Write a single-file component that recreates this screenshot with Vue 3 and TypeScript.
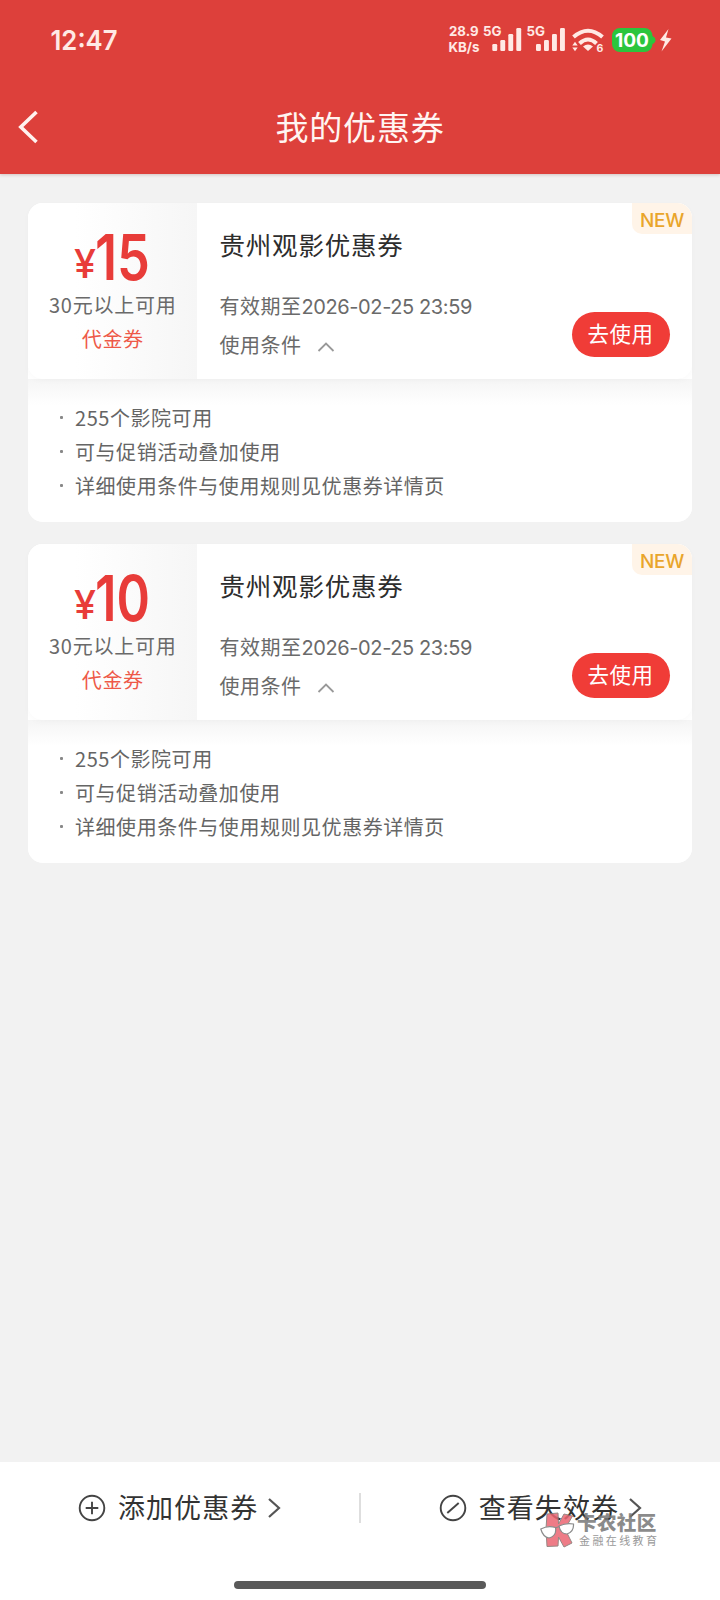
<script setup lang="ts">
interface Coupon {
  id: number
  amount: string
  threshold: string
  kind: string
  title: string
  expires: string
  rules: string[]
}

const rules: string[] = ['255个影院可用', '可与促销活动叠加使用', '详细使用条件与使用规则见优惠券详情页']

const coupons: Coupon[] = ['15', '10'].map((amount, id) => ({
  id,
  amount,
  threshold: '30元以上可用',
  kind: '代金券',
  title: '贵州观影优惠券',
  expires: '2026-02-25 23:59',
  rules,
}))

const bars = [
  { x: 0, h: 7 },
  { x: 8, h: 11 },
  { x: 16, h: 17 },
  { x: 24, h: 23 },
]
</script>

<template>
  <div class="screen">
    <header class="header">
      <div class="status">
        <svg width="720" height="80" viewBox="0 0 720 80" fill="#ffe9e5">
          <text class="clock" x="50.500" y="50.3" textLength="67" lengthAdjust="spacingAndGlyphs">12:47</text>
          <g class="tiny">
            <text x="449" y="36.4" textLength="29.500" lengthAdjust="spacingAndGlyphs">28.9</text>
            <text x="448.500" y="51.500" textLength="31" lengthAdjust="spacingAndGlyphs">KB/s</text>
            <text x="483" y="36.4" textLength="18.500" lengthAdjust="spacingAndGlyphs">5G</text>
            <text x="526.500" y="36.4" textLength="18.500" lengthAdjust="spacingAndGlyphs">5G</text>
          </g>
          <g v-for="left in [492.3, 536]" :key="left">
            <rect v-for="b in bars" :key="b.x" :x="left + b.x" :y="51 - b.h" width="4.9" :height="b.h" rx="1.2" />
          </g>
          <g fill="none" stroke="#ffe9e5" stroke-width="4">
            <path d="M573.500 37Q588 24.500 602.500 37" />
            <path d="M579.500 43.500Q588 35.500 596.500 43.500" />
          </g>
          <path d="M583 46.500Q588 42.500 593 46.500L588 51Z" />
          <path d="M572.300 45.500L575 41.800L577.700 45.500ZM572.300 47.500L575 51.200L577.700 47.500Z" />
          <text class="six" x="596.500" y="51.500">6</text>
          <rect x="612" y="28" width="40.500" height="24" rx="8" fill="#2bc53d" />
          <path d="M652 36Q655.500 37 655.500 40T652 44Z" fill="#2bc53d" />
          <text class="battery" x="615" y="46.600" textLength="34" lengthAdjust="spacingAndGlyphs">100</text>
          <path d="M668.500 29L660 40L665 41.500L661.500 51.500L671.500 38.500L666 37.500Z" />
        </svg>
      </div>
      <div class="nav">
        <svg class="back" width="24" height="34" viewBox="0 0 24 34" fill="none" stroke="#fff2ef" stroke-width="3.6">
          <path d="M20.500 2L4.800 17L20.500 32" />
        </svg>
        <h1>我的优惠券</h1>
      </div>
    </header>

    <main class="list">
      <article v-for="c in coupons" :key="c.id" class="coupon">
        <section class="card">
          <div class="value">
            <svg class="amount" width="100" height="62" viewBox="0 0 100 62">
              <text class="yen" x="12" y="55" textLength="22" lengthAdjust="spacingAndGlyphs">¥</text>
              <text class="num" x="33" y="56.500" textLength="55" lengthAdjust="spacingAndGlyphs">{{ c.amount }}</text>
            </svg>
            <div class="threshold">{{ c.threshold }}</div>
            <div class="kind">{{ c.kind }}</div>
          </div>
          <div class="info">
            <h2>{{ c.title }}</h2>
            <p class="line">有效期至<span class="date">{{ c.expires }}</span></p>
            <p class="line cond">
              使用条件
              <svg width="18" height="12" viewBox="0 0 18 12" fill="none" stroke="#999" stroke-width="1.8">
                <path d="M1.500 10L9 2.500L16.500 10" />
              </svg>
            </p>
          </div>
          <button class="use">去使用</button>
          <span class="badge">NEW</span>
        </section>
        <ul class="rules">
          <li v-for="r in c.rules" :key="r">{{ r }}</li>
        </ul>
      </article>
    </main>

    <footer class="footer">
      <div class="actions">
        <div class="action">
          <svg width="28" height="28" viewBox="0 0 28 28" fill="none" stroke="#444" stroke-width="1.9">
            <circle cx="14" cy="14" r="12.3" />
            <path d="M14 7.700V20.300M7.700 14H20.300" />
          </svg>
          <span>添加优惠券</span>
          <svg class="next" width="14" height="20" viewBox="0 0 14 20" fill="none" stroke="#555" stroke-width="2.2">
            <path d="M2 1L12 10L2 19" />
          </svg>
        </div>
        <i class="divider"></i>
        <div class="action">
          <svg width="28" height="28" viewBox="0 0 28 28" fill="none" stroke="#444" stroke-width="1.9">
            <circle cx="14" cy="14" r="12.3" />
            <path d="M8.300 19L19.700 9" />
          </svg>
          <span>查看失效券</span>
          <svg class="next" width="14" height="20" viewBox="0 0 14 20" fill="none" stroke="#555" stroke-width="2.2">
            <path d="M2 1L12 10L2 19" />
          </svg>
        </div>
      </div>
      <div class="home"></div>
      <div class="brand">
        <svg width="36" height="38" viewBox="0 0 36 38">
          <path d="M7 2L18 1L18.500 12L24 2L32.500 4L25 17L32 31L24 35L18.500 25L18 34L7 34.500L6 17Z" fill="#ec6673" stroke="#85736f" stroke-width="1" />
          <path d="M.8 17Q8 13 15.500 15.500Q17 24 9 26Q3 25 .8 17ZM19 14Q26 10.500 33.500 12Q34 20 27 22Q20.500 22 19 14Z" fill="#fff" stroke="#777" stroke-width="1.200" />
          <path d="M15 16L19.500 14.500" stroke="#777" stroke-width="1.200" />
        </svg>
        <div class="brand-text">
          <b>卡农社区</b>
          <small>金融在线教育</small>
        </div>
      </div>
    </footer>
  </div>
</template>

<style>
body {
  margin: 0;
  background: #f2f2f2;
}
</style>

<style scoped>
.screen {
  width: 720px;
  height: 1600px;
  display: flex;
  flex-direction: column;
  overflow: hidden;
  background: #f2f2f2;
  font-family: "Noto Sans CJK SC", sans-serif;
}
h1, h2, p, ul {
  margin: 0;
  padding: 0;
  font-weight: 400;
}
svg {
  display: block;
  flex: none;
  overflow: visible;
}
.header {
  height: 174px;
  flex: none;
  background: #dd403b;
  box-shadow: 0 1px 3px rgba(120, 60, 50, 0.25);
}
.status {
  height: 80px;
}
.clock {
  font: 600 27.5px Inter, sans-serif;
}
.tiny {
  font: 700 13.5px Inter, sans-serif;
}
.six {
  font: 700 10.5px Inter, sans-serif;
}
.battery {
  font: 700 18.5px Inter, sans-serif;
  fill: #fff;
}
.nav {
  display: grid;
  grid-template-columns: 60px 1fr 60px;
  align-items: center;
  height: 94px;
}
.back {
  margin-left: 16px;
}
h1 {
  margin-top: -3px;
  text-align: center;
  color: #fff5f2;
  font-size: 33px;
  line-height: 48px;
  letter-spacing: 0.8px;
}
.list {
  flex: 1;
  padding: 28.5px 28px 0 27.5px;
  display: flex;
  flex-direction: column;
  gap: 22px;
}
.coupon {
  height: 319px;
  background: #fff;
  border-radius: 15px;
}
.card {
  position: relative;
  display: flex;
  height: 176.5px;
  background: #fff;
  border-radius: 15px;
  box-shadow: 0 2px 6px rgba(0, 0, 0, 0.025);
}
.value {
  width: 169.5px;
  flex: none;
  display: flex;
  flex-direction: column;
  align-items: center;
  border-radius: 15px 0 0 15px;
  background: linear-gradient(90deg, #fff 28%, #f6f6f6);
}
.amount {
  margin-top: 20px;
}
.num {
  font: 600 63.5px Inter, sans-serif;
  fill: #e83c39;
}
.yen {
  font: 500 40px Inter, sans-serif;
  fill: #e83c39;
}
.threshold,
.kind {
  font-size: 20px;
  line-height: 34px;
  letter-spacing: 0.6px;
  color: #6a6a6a;
}
.threshold {
  margin: 3.5px 0 0 1px;
  letter-spacing: 0.75px;
}
.kind {
  margin-left: 1px;
  color: #ee5948;
}
.info {
  padding-left: 22.5px;
  flex: 1;
}
h2 {
  margin-top: 22.5px;
  font-size: 25.5px;
  line-height: 38px;
  letter-spacing: 0.8px;
  color: #2d2d2d;
}
.line {
  margin-top: 23.5px;
  font-size: 20px;
  line-height: 38px;
  letter-spacing: 0.5px;
  color: #6a6a6a;
}
.date {
  font-family: Inter, sans-serif;
  letter-spacing: -0.4px;
}
.cond {
  margin-top: 0;
  display: flex;
  align-items: center;
  gap: 15px;
}
.cond svg {
  margin-top: 5px;
}
.use {
  align-self: flex-end;
  width: 98px;
  height: 45px;
  margin: 0 22.5px 22.500px 0;
  padding: 0 0 3px;
  border: 0;
  border-radius: 23px;
  background: #f03c37;
  color: #fff;
  font: 400 21.5px/42px "Noto Sans CJK SC", sans-serif;
  letter-spacing: 0.5px;
}
.badge {
  position: absolute;
  top: 0;
  right: 0;
  width: 60px;
  height: 31px;
  border-radius: 0 15px 0 10px;
  background: #fff4e8;
  color: #e9a52b;
  font: 500 19px/36px Inter, sans-serif;
  letter-spacing: -0.3px;
  text-align: center;
}
.rules {
  height: 142.5px;
  box-sizing: border-box;
  padding: 22px 0 0 30px;
  list-style: none;
  border-radius: 0 0 15px 15px;
  background: linear-gradient(#f5f5f5, #fff 26px);
}
.rules li {
  display: flex;
  align-items: center;
  height: 33.8px;
  font-size: 20px;
  letter-spacing: 0.55px;
  color: #656565;
}
.rules li::before {
  content: "";
  width: 3px;
  height: 3px;
  margin: 0 12.5px 0 2px;
  border-radius: 1px;
  background: #888;
}
.footer {
  position: relative;
  height: 138.5px;
  flex: none;
  background: #fff;
}
.actions {
  display: flex;
  align-items: center;
  height: 93px;
}
.action {
  flex: 1;
  display: flex;
  align-items: center;
  justify-content: center;
}
.action span {
  margin: -4px 9px 0 12px;
  font-size: 27px;
  letter-spacing: 1.1px;
  color: #333;
}
.divider {
  width: 1.5px;
  height: 30px;
  background: #dedede;
}
.home {
  width: 252px;
  height: 7.5px;
  margin: 26.5px auto 0;
  border-radius: 4px;
  background: #5a5a5a;
}
.brand {
  position: absolute;
  left: 540px;
  top: 50px;
  display: flex;
  opacity: 0.85;
}
.brand-text {
  display: flex;
  flex-direction: column;
  margin: -1.5px 0 0 1px;
  white-space: nowrap;
  color: #777;
}
.brand-text b {
  font-size: 19.5px;
  font-weight: 900;
  line-height: 24px;
  letter-spacing: 0.4px;
}
.brand-text small {
  margin: -1.5px 0 0 2px;
  font-size: 11px;
  line-height: 15px;
  letter-spacing: 2.4px;
  color: #888;
}
</style>
